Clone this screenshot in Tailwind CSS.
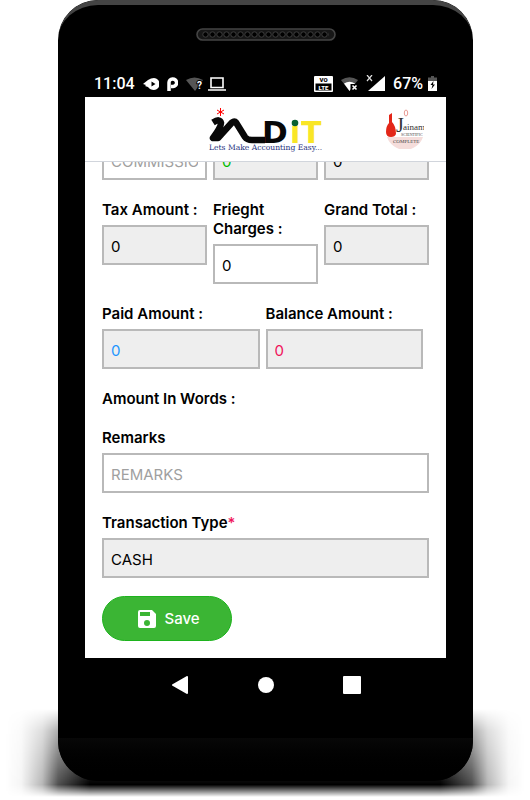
<!DOCTYPE html>
<html lang="en">
<head>
    <meta charset="UTF-8">
    <meta name="viewport" content="width=device-width, initial-scale=1.0">
    <title>iADiT - Sale Entry</title>
    <script src="https://cdn.jsdelivr.net/npm/@tailwindcss/browser@4"></script>
</head>

<body class="bg-white font-['Inter',sans-serif] text-black">
    <div class="relative pl-[58px] pr-[57px] pb-5">
        <!-- Shadow under the phone -->
        <div class="absolute inset-x-0 bottom-1 h-[88px] bg-[linear-gradient(to_right,transparent_1%,#0000000a_4%,#00000048_8%,#000000b0_11%,black_17%,black_83%,#000000b0_89%,#00000048_92%,#0000000a_96%,transparent_99%)] [mask-image:linear-gradient(to_bottom,transparent,#0007_25%,black_86%,transparent)]"></div>

        <div class="relative rounded-[40px] bg-black overflow-hidden">
            <!-- Top of the phone -->
            <div class="h-[70px] rounded-t-[40px] border-t-[5px] border-[#444] pt-[23px]">
                <svg class="mx-auto" width="140" height="13" viewBox="0 0 140 13">
                    <defs>
                        <pattern id="holes" x="6" y="0" width="7" height="13" patternUnits="userSpaceOnUse">
                            <circle cx="3.5" cy="6.5" r="2.7" fill="#000" stroke="#3c3c3c" stroke-width="1"/>
                        </pattern>
                    </defs>
                    <rect x="1" y="1" width="138" height="11" rx="5.5" fill="#171717" stroke="#444" stroke-width="1.6"/>
                    <rect x="6" y="2" width="127" height="9" fill="url(#holes)"/>
                </svg>
            </div>

            <!-- Status bar -->
            <div class="flex h-[27px] items-center justify-between px-9 font-['Roboto',sans-serif] text-base font-medium text-white">
                <div class="flex items-center gap-2">
                    <span>11:04</span>
                    <svg width="16" height="12" viewBox="0 0 16 12"><path d="M0 6 5 2Q8 0 11 0a5.5 6 0 0 1 0 12Q7 12 5 9L2 8l1-1Z" fill="#fff"/><path d="M8.500 3.500 12.500 6l-4 2.500Z" fill="#000"/></svg>
                    <svg width="11" height="14" viewBox="0 0 11 14"><path d="M2 14V6a3.800 3.800 0 1 1 4 3.500H4" fill="none" stroke="#fff" stroke-width="3.500"/></svg>
                    <svg width="17" height="16" viewBox="0 0 17 16"><path d="M0 4Q8.500-1 17 4L9 15Z" fill="#555"/><text x="11" y="13" font-size="10" font-weight="700" fill="#fff" stroke="#000" stroke-width="2" paint-order="stroke">?</text></svg>
                    <svg class="-ml-[3px]" width="18" height="14" viewBox="0 0 18 14"><path d="M3 1h12v9.500H3ZM0 13h18" fill="none" stroke="#fff" stroke-width="1.600"/></svg>
                </div>
                <div class="flex items-center gap-2">
                    <svg width="19" height="16" viewBox="0 0 19 16"><rect width="19" height="16" rx="1" fill="#fff"/><rect x="1.500" y="7.500" width="16" height="7" fill="#000"/><text x="9.500" y="6.300" text-anchor="middle" font-size="6" font-weight="900" fill="#000">VO</text><text x="9.500" y="13.500" text-anchor="middle" font-size="6" font-weight="900" fill="#fff">LTE</text></svg>
                    <svg width="17" height="14" viewBox="0 0 17 14"><path d="M0 3Q8.500-2.500 17 3L8.500 14Z" fill="#555"/><path d="M3 6.500Q8.500 3 14 6.500L8.500 14Z" fill="#fff"/><path d="M9.500 7H17v7H9.500Z" fill="#000"/><path d="m11.500 8.500 4 4m0-4-4 4" stroke="#fff" stroke-width="1.600"/></svg>
                    <svg width="19" height="17" viewBox="0 0 19 17"><path d="M19 1v15H2Z" fill="#fff"/><path d="m1 0 5 6M6 0 1 6" stroke="#ddd" stroke-width="1.200"/></svg>
                    <span>67%</span>
                    <svg class="-ml-[3px]" width="9" height="15" viewBox="0 0 9 15"><path d="M3 0h3v1.500h3V6H0V1.500h3Z" fill="#555"/><path d="M0 5h9v10H0Z" fill="#fff"/><path d="m5.500 5-3 4h2l-1 4L7 8.500H5Z" fill="#000"/></svg>
                </div>
            </div>

            <!-- App screen -->
            <div class="mx-[27px] bg-white">
                <header class="relative z-10 flex h-[65px] items-center justify-end border-b border-gray-300 bg-white pr-[22px]">
                    <svg class="mr-[62px]" width="116" height="46" viewBox="0 0 116 46" role="img" aria-label="iADiT">
                        <path d="M12.500 2v8M9 4l7 4M16 4l-7 4" stroke="#f00" stroke-width="1"/>
                        <path d="M5 16.500Q12 12 13 17q0 4-8 15h5L24 16.500q2.500-2 4 0L37 31q2 3 7 3h13" fill="none" stroke="#080808" stroke-width="6.500" stroke-linejoin="round"/>
                        <text x="54" y="37" font-family="DejaVu Sans" font-weight="700" font-size="31" fill="#080808">D</text>
                        <text x="82" y="37" font-family="DejaVu Sans" font-weight="700" font-size="30" fill="#f9e626">i</text>
                        <text x="93" y="37" font-family="DejaVu Sans" font-weight="700" font-size="30" fill="#f9e626">T</text>
                        <rect x="82" y="12" width="11" height="8" fill="#fff"/>
                        <circle cx="87" cy="17" r="3.300" fill="#076030"/>
                        <text x="1" y="44" font-family="DejaVu Serif" font-size="7.600" fill="#24307c">Lets Make Accounting Easy...</text>
                    </svg>
                    <svg width="38" height="40" viewBox="0 0 38 40" role="img" aria-label="Jainam">
                        <path d="M0 28h37a19 19 0 0 1-36 0Z" fill="#f5dddb"/>
                        <path d="M3 6l3-2v9q4 4 4 12-1 3-5 3-5 0-5-5 0-6 3-9Z" fill="#e32618"/>
                        <ellipse cx="20" cy="4" rx="1.700" ry="3" fill="none" stroke="#e99b94"/>
                        <text x="10" y="23" font-family="Liberation Serif" font-size="20" fill="#333">J</text>
                        <text x="17" y="21" font-family="Liberation Serif" font-size="9" fill="#333">ainam</text>
                        <text x="15" y="27" font-family="Liberation Serif" font-size="4" fill="#444">SCIENTIFIC</text>
                        <text x="7" y="34" font-family="Liberation Serif" font-size="5" fill="#444">COMPLETE</text>
                    </svg>
                </header>

                <form class="-mt-[22px] flex flex-col gap-5 px-[17px] pb-[17px] text-[15px] leading-[19px]">
                    <div class="grid grid-cols-3 gap-[6px]">
                        <input type="text" aria-label="Commission" placeholder="COMMISSION" class="h-10 w-full border-2 border-[#b9b9b9] px-[7px] pt-[2px] placeholder:text-[#a0a0a0]">
                        <input type="text" aria-label="Discount" value="0" readonly class="h-10 w-full border-2 border-[#b9b9b9] bg-[#eee] px-[7px] pt-[2px] text-[#0b0]">
                        <input type="text" aria-label="Total" value="0" readonly class="h-10 w-full border-2 border-[#b9b9b9] bg-[#eee] px-[7px] pt-[2px]">
                    </div>

                    <div class="grid grid-cols-3 items-start gap-[6px]">
                        <div>
                            <label for="tax" class="mb-[6px] block font-semibold">Tax Amount :</label>
                            <input type="text" id="tax" value="0" readonly class="block h-10 w-full border-2 border-[#b9b9b9] bg-[#eee] px-[7px] pt-[2px]">
                        </div>
                        <div>
                            <label for="frieght" class="mb-[6px] block font-semibold">Frieght Charges :</label>
                            <input type="text" id="frieght" value="0" class="block h-10 w-full border-2 border-[#b9b9b9] px-[7px] pt-[2px]">
                        </div>
                        <div>
                            <label for="grand" class="mb-[6px] block font-semibold">Grand Total :</label>
                            <input type="text" id="grand" value="0" readonly class="block h-10 w-full border-2 border-[#b9b9b9] bg-[#eee] px-[7px] pt-[2px]">
                        </div>
                    </div>

                    <div class="grid grid-cols-2 gap-[6px] pr-[6px]">
                        <div>
                            <label for="paid" class="mb-[6px] block font-semibold">Paid Amount :</label>
                            <input type="text" id="paid" value="0" readonly class="block h-10 w-full border-2 border-[#b9b9b9] bg-[#eee] px-[7px] pt-[2px] text-[#1e96ff]">
                        </div>
                        <div>
                            <label for="balance" class="mb-[6px] block font-semibold">Balance Amount :</label>
                            <input type="text" id="balance" value="0" readonly class="block h-10 w-full border-2 border-[#b9b9b9] bg-[#eee] px-[7px] pt-[2px] text-[#f0145a]">
                        </div>
                    </div>

                    <p class="font-semibold">Amount In Words :</p>

                    <div>
                        <label for="remarks" class="mb-[6px] block font-semibold">Remarks</label>
                        <input type="text" id="remarks" placeholder="REMARKS" class="block h-10 w-full border-2 border-[#b9b9b9] px-[7px] pt-[2px] placeholder:text-[#a0a0a0]">
                    </div>

                    <div>
                        <label for="type" class="mb-[6px] block font-semibold">Transaction Type<span class="font-medium text-[#f0145a]">*</span></label>
                        <select id="type" class="block h-10 w-full appearance-none border-2 border-[#b9b9b9] bg-[#eee] px-[7px] pt-[2px]">
                            <option>CASH</option>
                        </select>
                    </div>

                    <button type="submit" class="-mt-[2px] flex h-[45px] w-[130px] items-center justify-center gap-2 rounded-full border border-[#1db31d] bg-[#3bb534] pl-1 font-medium text-white">
                        <svg width="18" height="18" viewBox="0 0 18 18" fill="#fff"><path fill-rule="evenodd" d="M2 0h12l4 4v12a2 2 0 0 1-2 2H2a2 2 0 0 1-2-2V2a2 2 0 0 1 2-2Zm0 2v4h10V2Zm7 8a3 3 0 1 0 0 6 3 3 0 0 0 0-6Z"/></svg>
                        Save
                    </button>
                </form>
            </div>

            <!-- Android navigation -->
            <nav class="flex h-20 items-start justify-center gap-[68px] pt-[18px]">
                <button type="button" aria-label="Back"><svg width="18" height="18" viewBox="0 0 18 18"><path d="M2 9 16 1v16Z" fill="#fff" stroke="#fff" stroke-width="2" stroke-linejoin="round"/></svg></button>
                <button type="button" aria-label="Home"><svg width="18" height="18" viewBox="0 0 18 18"><circle cx="9" cy="9" r="8" fill="#fff"/></svg></button>
                <button type="button" aria-label="Recent apps"><svg width="18" height="18" viewBox="0 0 18 18"><rect width="18" height="18" rx="1" fill="#fff"/></svg></button>
            </nav>
            <div class="h-[43px] bg-linear-to-b from-[#080808] to-black"></div>
        </div>
    </div>
</body>
</html>
